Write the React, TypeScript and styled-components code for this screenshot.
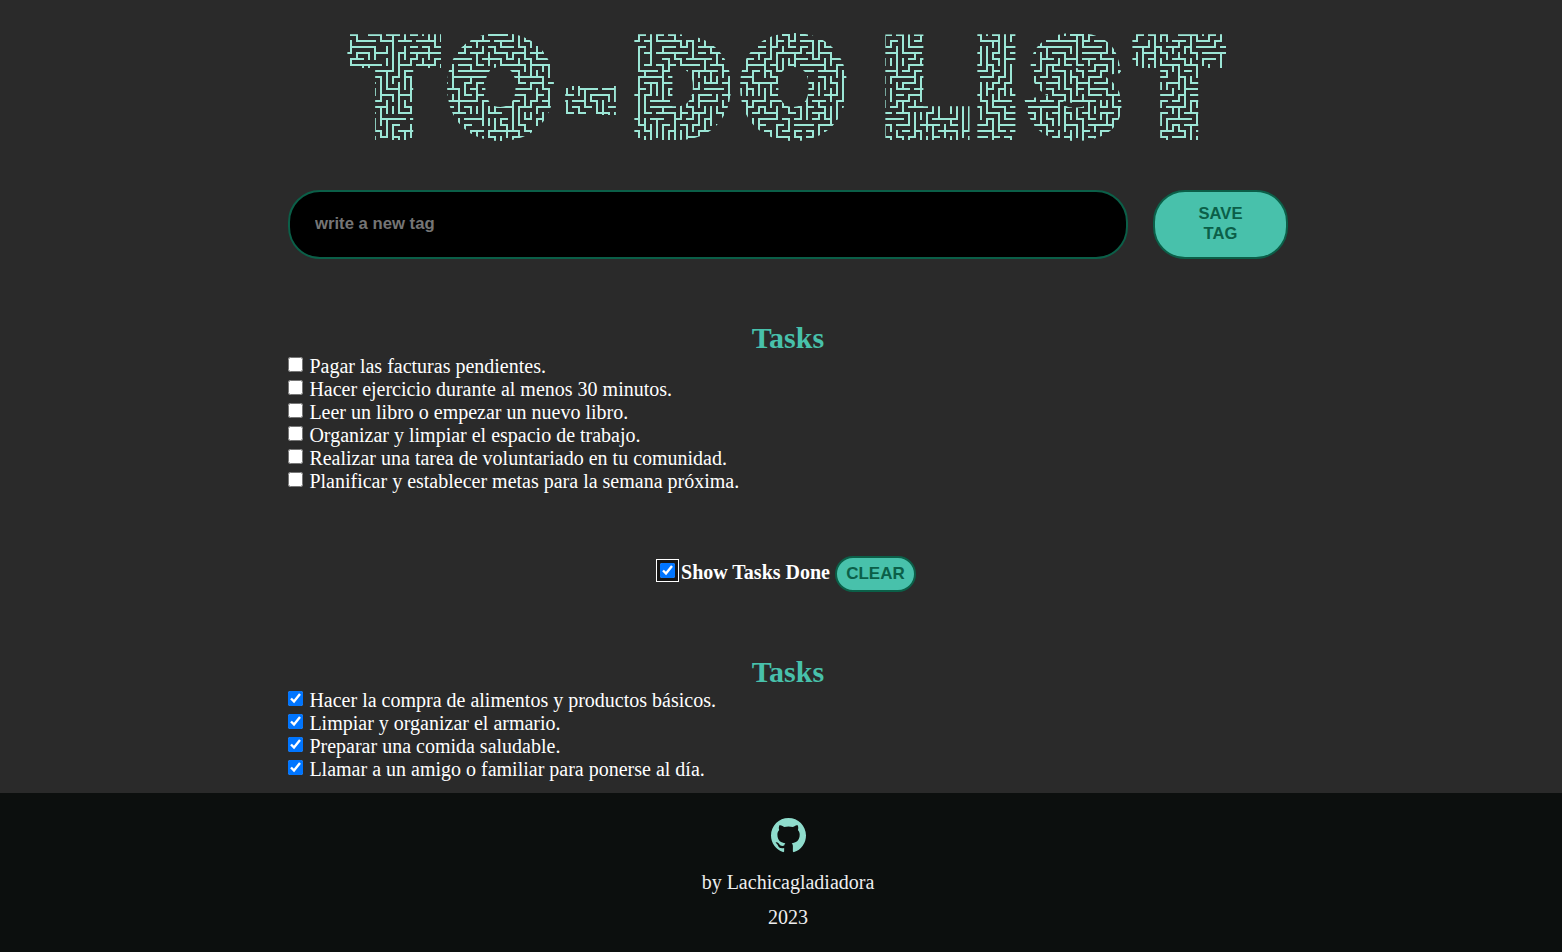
import React from "react";
import styled, { createGlobalStyle } from "styled-components";

const GlobalStyle = createGlobalStyle`
  html, body { margin: 0; padding: 0; background: #2a2a2a; overflow: hidden; }
  body { font-family: "Liberation Serif", serif; font-size: 20px; color: #fff; }
`;

/* deterministic maze for the title fill */
const CELL = 6;
const COLS = 150;
const ROWS = 20;
function buildMaze(): string {
  let seed = 20230417;
  const rnd = () => {
    seed = (seed * 1664525 + 1013904223) >>> 0;
    return seed / 4294967296;
  };
  const seen = new Uint8Array(COLS * ROWS);
  const right = new Uint8Array(COLS * ROWS).fill(1);
  const down = new Uint8Array(COLS * ROWS).fill(1);
  const stack: number[] = [0];
  seen[0] = 1;
  while (stack.length) {
    const idx = stack[stack.length - (rnd() < 0.88 ? 1 : Math.ceil(rnd() * Math.min(stack.length, 8)))];
    const c = idx % COLS;
    const r = Math.floor(idx / COLS);
    const options: number[][] = [];
    if (c > 0 && !seen[idx - 1]) options.push([idx - 1, 0]);
    if (c < COLS - 1 && !seen[idx + 1]) options.push([idx + 1, 1]);
    if (r > 0 && !seen[idx - COLS]) options.push([idx - COLS, 2]);
    if (r < ROWS - 1 && !seen[idx + COLS]) options.push([idx + COLS, 3]);
    if (!options.length) {
      stack.splice(stack.lastIndexOf(idx), 1);
      continue;
    }
    const [next, dir] = options[Math.floor(rnd() * options.length)];
    if (dir === 0) right[next] = 0;
    if (dir === 1) right[idx] = 0;
    if (dir === 2) down[next] = 0;
    if (dir === 3) down[idx] = 0;
    seen[next] = 1;
    stack.push(next);
  }
  let d = "";
  for (let r = 0; r < ROWS; r++) {
    for (let c = 0; c < COLS; c++) {
      const i = r * COLS + c;
      const x = c * CELL + 1;
      const y = r * CELL + 1;
      if (right[i] && rnd() > 0.08) d += `M${x + CELL} ${y - 1}v${CELL + 2}`;
      if (down[i] && rnd() > 0.08) d += `M${x - 1} ${y + CELL}h${CELL + 2}`;
    }
  }
  return d;
}
const MAZE = buildMaze();

const Page = styled.div`
  min-height: 952px;
  display: flex;
  flex-direction: column;
`;
const Main = styled.main`
  height: 793px;
  padding-left: 14px;
  display: flex;
  flex-direction: column;
  align-items: center;
`;
const TitleArt = styled.svg`
  display: block;
  width: 900px;
  height: 122px;
  margin-top: 28px;
  overflow: visible;
`;
const TitleText = styled.text`
  font-family: "Liberation Sans", sans-serif;
  font-weight: 700;
  font-size: 125px;
  stroke-width: 20px;
  stroke-linejoin: miter;
`;
const TitleDash = styled.tspan`
  font-size: 160px;
  stroke-width: 10px;
`;
const Content = styled.div`
  width: 1000px;
  display: flex;
  flex-direction: column;
`;
const TagForm = styled.form`
  display: flex;
  gap: 25px;
  margin-top: 40px;
`;
const TagInput = styled.input`
  flex: 1;
  height: 69px;
  box-sizing: border-box;
  border: 2px solid #0b5f48;
  border-radius: 32px;
  background: #000;
  padding: 0 25px 2px;
  font: 700 16.7px "Liberation Sans", sans-serif;
  color: #fff;
  outline: none;
  &::placeholder { color: #757575; opacity: 1; }
`;
const SaveButton = styled.button`
  width: 135px;
  height: 69px;
  box-sizing: border-box;
  border: 2px solid #0b5f48;
  border-radius: 32px;
  background: #48c1ab;
  color: #0b5f48;
  padding: 0 40px 1px;
  font: 700 16.6px/20px "Liberation Sans", sans-serif;
`;
const Section = styled.section<{ $top: number }>`
  margin-top: ${(p) => p.$top}px;
  display: flex;
  flex-direction: column;
`;
const SectionTitle = styled.h2`
  margin: 0;
  padding-bottom: 2px;
  text-align: center;
  color: #48c1ab;
  font-size: 30px;
  font-weight: 700;
  line-height: 31px;
`;
const TaskRow = styled.label`
  display: flex;
  align-items: flex-start;
  height: 23px;
  line-height: 23px;
  font-size: 20px;
  gap: 6.4px;
`;
const Check = styled.input.attrs({ type: "checkbox" })`
  width: 15px;
  height: 15px;
  margin: 2px 0 0 0;
  flex: none;
`;
const ToggleBar = styled.div`
  margin-top: 61px;
  height: 40px;
  display: flex;
  align-items: center;
  justify-content: center;
  font-weight: 700;
  font-size: 20px;
`;
const ToggleCheck = styled(Check)`
  margin: 0 6px 7px 0;
  border-radius: 2px;
  box-shadow: 0 0 0 3px #161616, 0 0 0 4px #fff;
`;
const ToggleLabel = styled.span`
  margin: 0 5px 4px 0;
`;
const ClearButton = styled.button`
  width: 81px;
  height: 36px;
  box-sizing: border-box;
  border: 2px solid #0b5f48;
  border-radius: 18px;
  background: #48c1ab;
  color: #0b5f48;
  padding: 0 0 1px;
  font: 700 17px "Liberation Sans", sans-serif;
`;
const Footer = styled.footer`
  height: 159px;
  background: #0c0f0e;
  padding-left: 14px;
  display: flex;
  flex-direction: column;
  align-items: center;
  color: #eee;
  font-size: 20px;
  line-height: 23px;
`;
const GithubLink = styled.a`
  display: block;
  width: 35px;
  height: 35px;
  margin-top: 25px;
  color: #8fdccc;
`;
const FooterLine = styled.p`
  margin: 18px 0 0;
  & + & { margin-top: 12px; }
`;

const open = [
  "Pagar las facturas pendientes.",
  "Hacer ejercicio durante al menos 30 minutos.",
  "Leer un libro o empezar un nuevo libro.",
  "Organizar y limpiar el espacio de trabajo.",
  "Realizar una tarea de voluntariado en tu comunidad.",
  "Planificar y establecer metas para la semana próxima.",
];
const done = [
  "Hacer la compra de alimentos y productos básicos.",
  "Limpiar y organizar el armario.",
  "Preparar una comida saludable.",
  "Llamar a un amigo o familiar para ponerse al día.",
];

export default function App() {
  return (
    <Page>
      <GlobalStyle />
      <Main>
        <TitleArt viewBox="0 0 900 122">
          <defs>
            <pattern id="maze" patternUnits="userSpaceOnUse" width={COLS * CELL} height={ROWS * CELL + 2}>
              <path d={MAZE} fill="none" stroke="#9ce6d6" strokeWidth={2} />
            </pattern>
          </defs>
          <TitleText y={102} fill="url(#maze)" stroke="url(#maze)">
            <tspan x={18} y={102}>T</tspan>
            <tspan x={114} y={102}>O</tspan>
            <TitleDash x={226} y={114}>-</TitleDash>
            <tspan x={298} y={102}>D</tspan>
            <tspan x={407} y={102}>O</tspan>
            <tspan x={510} y={102}> </tspan>
            <tspan x={549} y={102}>L</tspan>
            <tspan x={641} y={102}>I</tspan>
            <tspan x={695} y={102}>S</tspan>
            <tspan x={803} y={102}>T</tspan>
          </TitleText>
        </TitleArt>
        <Content>
          <TagForm onSubmit={(e) => e.preventDefault()}>
            <TagInput placeholder="write a new tag" />
            <SaveButton type="submit">SAVE TAG</SaveButton>
          </TagForm>
          <Section $top={63}>
            <SectionTitle>Tasks</SectionTitle>
            {open.map((t) => (
              <TaskRow key={t}>
                <Check />
                {t}
              </TaskRow>
            ))}
          </Section>
          <ToggleBar>
            <ToggleCheck defaultChecked />
            <ToggleLabel>Show Tasks Done</ToggleLabel>
            <ClearButton type="button">CLEAR</ClearButton>
          </ToggleBar>
          <Section $top={62}>
            <SectionTitle>Tasks</SectionTitle>
            {done.map((t) => (
              <TaskRow key={t}>
                <Check defaultChecked />
                {t}
              </TaskRow>
            ))}
          </Section>
        </Content>
      </Main>
      <Footer>
        <GithubLink href="#" aria-label="GitHub">
          <svg viewBox="0 0 16 16" width="35" height="35" fill="currentColor">
            <path d="M8 0C3.58 0 0 3.58 0 8c0 3.54 2.29 6.53 5.47 7.59.4.07.55-.17.55-.38 0-.19-.01-.82-.01-1.49-2.01.37-2.53-.49-2.69-.94-.09-.23-.48-.94-.82-1.13-.28-.15-.68-.52-.01-.53.63-.01 1.08.58 1.23.82.72 1.21 1.87.87 2.33.66.07-.52.28-.87.51-1.07-1.78-.2-3.64-.89-3.64-3.95 0-.87.31-1.59.82-2.15-.08-.2-.36-1.02.08-2.12 0 0 .67-.21 2.2.82.64-.18 1.32-.27 2-.27s1.36.09 2 .27c1.53-1.04 2.2-.82 2.2-.82.44 1.1.16 1.92.08 2.12.51.56.82 1.27.82 2.15 0 3.07-1.87 3.75-3.65 3.95.29.25.54.73.54 1.48 0 1.07-.01 1.93-.01 2.2 0 .21.15.46.55.38A8.01 8.01 0 0 0 16 8c0-4.42-3.58-8-8-8z" />
          </svg>
        </GithubLink>
        <FooterLine>by Lachicagladiadora</FooterLine>
        <FooterLine>2023</FooterLine>
      </Footer>
    </Page>
  );
}
